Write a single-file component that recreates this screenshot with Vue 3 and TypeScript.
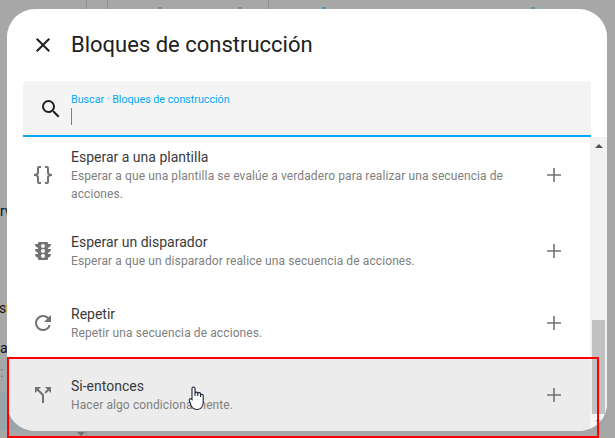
<script setup lang="ts">
interface Bloque {
  titulo: string;
  descripcion: string;
  icono: string;
  hover?: boolean;
}

const bloques: Bloque[] = [
  {
    titulo: "Esperar a una plantilla",
    descripcion:
      "Esperar a que una plantilla se evalúe a verdadero para realizar una secuencia de acciones.",
    icono:
      "M8 3a2 2 0 0 0-2 2v4a2 2 0 0 1-2 2H3v2h1a2 2 0 0 1 2 2v4a2 2 0 0 0 2 2h2v-2H8v-5a2 2 0 0 0-2-2 2 2 0 0 0 2-2V5h2V3H8m8 0a2 2 0 0 1 2 2v4a2 2 0 0 0 2 2h1v2h-1a2 2 0 0 0-2 2v4a2 2 0 0 1-2 2h-2v-2h2v-5a2 2 0 0 1 2-2 2 2 0 0 1-2-2V5h-2V3h2Z"
  },
  {
    titulo: "Esperar un disparador",
    descripcion: "Esperar a que un disparador realice una secuencia de acciones.",
    icono:
      "M12 9a2 2 0 0 1-2-2 2 2 0 0 1 2-2 2 2 0 0 1 2 2 2 2 0 0 1-2 2m0 5a2 2 0 0 1-2-2 2 2 0 0 1 2-2 2 2 0 0 1 2 2 2 2 0 0 1-2 2m0 5a2 2 0 0 1-2-2 2 2 0 0 1 2-2 2 2 0 0 1 2 2 2 2 0 0 1-2 2m8-9h-3V8.86c1.72-.45 3-2 3-3.86h-3V4a1 1 0 0 0-1-1H8a1 1 0 0 0-1 1v1H4c0 1.86 1.28 3.41 3 3.86V10H4c0 1.86 1.28 3.41 3 3.86V15H4c0 1.86 1.28 3.41 3 3.86V20a1 1 0 0 0 1 1h8a1 1 0 0 0 1-1v-1.14c1.72-.45 3-2 3-3.86h-3v-1.14c1.72-.45 3-2 3-3.86Z"
  },
  {
    titulo: "Repetir",
    descripcion: "Repetir una secuencia de acciones.",
    icono:
      "M17.65 6.35A7.96 7.96 0 0 0 12 4a8 8 0 0 0-8 8 8 8 0 0 0 8 8c3.73 0 6.84-2.55 7.73-6h-2.08A5.99 5.99 0 0 1 12 18a6 6 0 0 1-6-6 6 6 0 0 1 6-6c1.66 0 3.14.69 4.22 1.78L13 11h7V4l-2.35 2.35Z"
  },
  {
    titulo: "Si-entonces",
    descripcion: "Hacer algo condicionalmente.",
    icono:
      "M14 4l2.29 2.29-2.88 2.88 1.42 1.42 2.88-2.88L20 10V4h-6M10 4H4v6l2.29-2.29 4.71 4.7V20h2v-8.41l-5.29-5.3L10 4Z",
    hover: true
  }
];
</script>

<template>
  <main class="page">
    <div class="fondo">
      <span class="linea l1"></span>
      <span class="linea l2"></span>
      <span class="linea l3"></span>
      <span class="azul a1"></span>
      <span class="azul a2"></span>
      <span class="azul a3"></span>
      <span class="azul a4"></span>
      <span class="letra t1">rv</span>
      <span class="letra t2">s</span>
      <span class="letra t3">a</span>
      <span class="letra t4">:</span>
      <span class="amarillo"></span>
      <span class="panel-azul"></span>
      <span class="flecha-fondo"></span>
      <span class="linea-baja"></span>
    </div>

    <section class="dialog">
      <header class="cabecera">
        <button class="cerrar" aria-label="Cerrar">
          <svg viewBox="0 0 24 24" width="24" height="24">
            <path d="M19 6.41 17.59 5 12 10.59 6.41 5 5 6.41 10.59 12 5 17.59 6.41 19 12 13.41 17.59 19 19 17.59 13.41 12 19 6.41Z" />
          </svg>
        </button>
        <h2>Bloques de construcción</h2>
      </header>

      <div class="buscador">
        <svg class="lupa" viewBox="0 0 24 24" width="24" height="24">
          <path d="M9.5 3A6.5 6.5 0 0 1 16 9.5c0 1.61-.59 3.09-1.56 4.23l.27.27h.79l5 5-1.5 1.5-5-5v-.79l-.27-.27A6.52 6.52 0 0 1 9.5 16 6.5 6.5 0 0 1 3 9.5 6.5 6.5 0 0 1 9.5 3m0 2C7 5 5 7 5 9.5S7 14 9.5 14 14 12 14 9.5 12 5 9.5 5Z" />
        </svg>
        <div class="campo">
          <label>Buscar · Bloques de construcción</label>
          <span class="cursor"></span>
        </div>
      </div>

      <div class="cuerpo">
        <ul class="lista">
          <li v-for="b in bloques" :key="b.titulo" class="fila" :class="{ hover: b.hover }">
            <svg class="icono" viewBox="0 0 24 24" width="24" height="24">
              <path :d="b.icono" />
            </svg>
            <div class="textos">
              <div class="titulo">{{ b.titulo }}</div>
              <div class="descripcion">{{ b.descripcion }}</div>
            </div>
            <svg class="mas" viewBox="0 0 24 24" width="24" height="24">
              <path d="M19 12.8h-6.2V19h-1.6v-6.2H5v-1.6h6.2V5h1.6v6.2H19v1.6Z" />
            </svg>
          </li>
        </ul>

        <div class="scrollbar">
          <span class="flecha"></span>
          <span class="thumb"></span>
          <span class="pie"></span>
          <span class="flecha-abajo"></span>
        </div>
      </div>
    </section>

    <div class="marca-roja"></div>

    <svg class="mano" viewBox="0 0 20 26" width="20" height="26">
      <path d="M4 3.5a1.5 1.5 0 0 1 3 0V11V8.5a1.4 1.4 0 0 1 2.8 0V11V9a1.4 1.4 0 0 1 2.8 0V12V10.5a1.3 1.3 0 0 1 2.6 0V17c0 4-2 7.5-6 7.5c-3 0-4.5-1-6-3.5L1.5 16c-1-1.8 1-3 2.5-1.5Z" />
    </svg>
  </main>
</template>

<style scoped>
* {
  box-sizing: border-box;
}

.page {
  position: relative;
  width: 615px;
  height: 438px;
  overflow: hidden;
  background: #a7a7a7;
  font-family: Roboto, "Liberation Sans", sans-serif;
  display: flex;
  align-items: flex-start;
  padding: 9px 8px 0 7px;
}

.fondo {
  position: absolute;
  inset: 0;
}

.fondo span {
  position: absolute;
}

.linea {
  top: 0;
  height: 9px;
  width: 1px;
  background: #8f8f8f;
}

.l1 { left: 86px; }
.l2 { left: 107px; }
.l3 { left: 268px; }

.azul {
  top: 7px;
  width: 4px;
  height: 2px;
  background: #5a93b3;
}

.a1 { left: 158px; }
.a2 { left: 238px; }
.a3 { left: 322px; }
.a4 { left: 531px; }

.letra {
  left: 0;
  font-size: 14px;
  line-height: 16px;
  color: #111;
}

.t1 { top: 203px; }
.t2 { top: 300px; left: -1px; }
.t3 { top: 340px; }
.t4 { top: 364px; color: #3f86ad; }

.amarillo {
  left: 6px;
  top: 303px;
  width: 1px;
  height: 11px;
  background: #c9a860;
}

.panel-azul {
  left: 0;
  top: 392px;
  width: 80px;
  height: 39px;
  background: #9aa5a9;
}

.flecha-fondo {
  left: 77px;
  top: 432px;
  width: 0;
  height: 0;
  border-left: 4px solid transparent;
  border-right: 4px solid transparent;
  border-top: 4px solid #6f6f6f;
}

.linea-baja {
  left: 86px;
  top: 431px;
  width: 1px;
  height: 7px;
  background: #8f8f8f;
}

.dialog {
  position: relative;
  width: 600px;
  height: 422px;
  background: #fff;
  border-radius: 28px;
  overflow: hidden;
  display: flex;
  flex-direction: column;
}

.cabecera {
  height: 72px;
  flex: none;
  display: flex;
  align-items: center;
  padding-left: 24px;
  gap: 16px;
}

.cerrar {
  width: 24px;
  height: 24px;
  padding: 0;
  border: 0;
  background: none;
  display: block;
}

.cerrar svg {
  display: block;
  fill: #212121;
}

h2 {
  margin: 0 0 2px;
  font-size: 22px;
  font-weight: 400;
  color: #212121;
}

.buscador {
  height: 56px;
  flex: none;
  margin: 0 16px;
  background: #f4f4f4;
  border-radius: 4px 4px 0 0;
  border-bottom: 2px solid #03a9f4;
  display: flex;
  align-items: center;
  padding-left: 16px;
  gap: 8px;
}

.lupa {
  flex: none;
  fill: #212121;
  margin-top: 2px;
}

.campo {
  align-self: flex-start;
  padding-top: 13px;
  display: flex;
  flex-direction: column;
  gap: 2px;
}

.campo label {
  font-size: 10.7px;
  line-height: 12px;
  color: #03a9f4;
}

.cursor {
  display: block;
  width: 1px;
  height: 17px;
  background: #03a9f4;
}

.cuerpo {
  flex: 1;
  min-height: 0;
  display: flex;
}

.lista {
  flex: 1;
  margin: 0;
  padding: 0;
  list-style: none;
}

.fila {
  height: 72px;
  display: flex;
  align-items: center;
  padding: 0 24px;
}

.fila:first-child {
  height: 78px;
  padding-bottom: 2px;
}

.fila.hover {
  background: #ececec;
}

.icono {
  flex: none;
  fill: #727272;
}

.textos {
  flex: 1;
  padding: 0 16px;
  min-width: 0;
}

.titulo {
  font-size: 14px;
  line-height: 20px;
  color: #3a3a3a;
}

.descripcion {
  font-size: 12px;
  line-height: 18px;
  letter-spacing: 0.1px;
  color: #808080;
}

.mas {
  flex: none;
  fill: #727272;
}

.scrollbar {
  position: relative;
  flex: none;
  width: 17px;
  background: #f1f1f1;
}

.flecha {
  position: absolute;
  top: 7px;
  left: 5px;
  width: 0;
  height: 0;
  border-left: 4px solid transparent;
  border-right: 4px solid transparent;
  border-bottom: 4px solid #505050;
}

.thumb {
  position: absolute;
  left: 2px;
  right: 2px;
  top: 183px;
  height: 94px;
  background: #c1c1c1;
}

.pie {
  position: absolute;
  left: 0;
  right: 0;
  top: 277px;
  bottom: 0;
  background: #f7f7f7;
}

.flecha-abajo {
  position: absolute;
  top: 283px;
  left: 5px;
  width: 0;
  height: 0;
  border-left: 3px solid transparent;
  border-right: 3px solid transparent;
  border-top: 3px solid #b5b5b5;
}

.marca-roja {
  position: absolute;
  left: 7px;
  top: 357px;
  width: 592px;
  height: 81px;
  border: 2px solid #f00;
  pointer-events: none;
}

.mano {
  position: absolute;
  left: 188px;
  top: 385px;
  fill: #fff;
  stroke: #1a1f3a;
  stroke-width: 1.1;
}
</style>

<style>
html,
body {
  margin: 0;
  background: #a7a7a7;
}
</style>
